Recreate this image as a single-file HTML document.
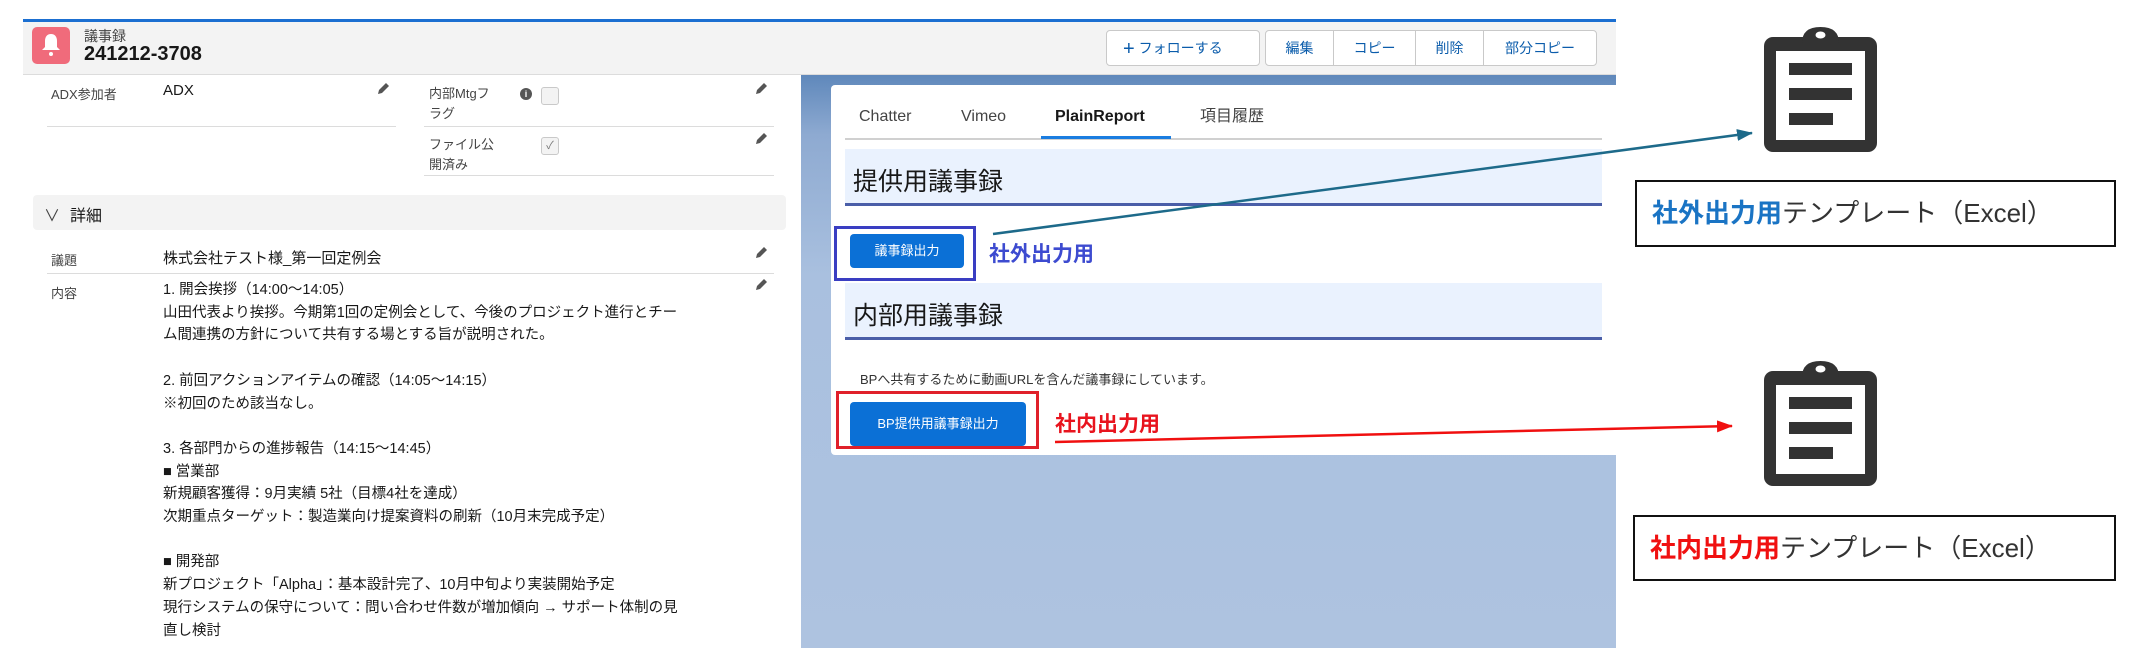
<!DOCTYPE html>
<html><head><meta charset="utf-8"><style>
*{margin:0;padding:0;box-sizing:border-box}
body{width:2130px;height:662px;background:#fff;position:relative;overflow:hidden;font-family:"Liberation Sans","Noto Sans CJK JP",sans-serif;color:#181818}
.a{position:absolute;white-space:nowrap}
.lbl{font-size:13px;color:#444}
.val{font-size:15px;color:#181818}
.pen{position:absolute;width:14px;height:14px}
.hr{position:absolute;height:1px;background:#dcdcdc}
.cl{position:absolute;left:163px;font-size:14.5px;line-height:22.7px;white-space:nowrap}
.tab{position:absolute;top:106px;font-size:16px;line-height:22px;height:22px;color:#444;white-space:nowrap}
</style></head><body>
<div class="a" style="left:23px;top:19px;width:1593px;height:3px;background:#1b6fd1"></div>
<div class="a" style="left:23px;top:22px;width:1593px;height:53px;background:#f3f3f3;border-bottom:1px solid #dcdcdc"></div>
<div class="a" style="left:32px;top:27px;width:38px;height:37px;background:#f06b7b;border-radius:5px"></div>
<svg class="a" style="left:39px;top:32px" width="24" height="26" viewBox="0 0 24 26"><path d="M12 2c-4 0-6 3-6 7v6l-3 3h18l-3-3V9c0-4-2-7-6-7z" fill="#fff"/><circle cx="12" cy="22" r="2" fill="#fff"/></svg>
<div class="a" style="left:84px;top:26px;font-size:14px;color:#444">議事録</div>
<div class="a" style="left:84px;top:43px;font-size:20px;font-weight:bold">241212-3708</div>
<div class="a" style="left:1106px;top:30px;width:154px;height:36px;border:1px solid #c9c9c9;border-radius:4px;background:#fff;color:#0b5cab;font-size:14px;line-height:34px;padding-left:16px"><span style="font-size:20px;vertical-align:-2px">+</span> フォローする</div>
<div class="a" style="left:1265px;top:30px;width:332px;height:36px;border:1px solid #c9c9c9;border-radius:4px;background:#fff;color:#0b5cab;font-size:14px;line-height:34px">
<span class="a" style="left:0;width:68px;text-align:center;border-right:1px solid #c9c9c9;height:34px">編集</span>
<span class="a" style="left:68px;width:82px;text-align:center;border-right:1px solid #c9c9c9;height:34px">コピー</span>
<span class="a" style="left:150px;width:68px;text-align:center;border-right:1px solid #c9c9c9;height:34px">削除</span>
<span class="a" style="left:218px;width:112px;text-align:center">部分コピー</span></div>

<div class="a lbl" style="left:51px;top:84px">ADX参加者</div>
<div class="a val" style="left:163px;top:82px">ADX</div>
<div class="hr" style="left:47px;top:126px;width:349px"></div>
<div class="a lbl" style="left:429px;top:84px;line-height:20px">内部Mtgフ<br>ラグ</div>
<div class="a" style="left:520px;top:88px;width:12px;height:12px;border-radius:50%;background:#555;color:#fff;font-size:9px;text-align:center;line-height:12px;font-weight:bold">i</div>
<div class="a" style="left:541px;top:87px;width:18px;height:18px;border:1px solid #c9c9c9;border-radius:3px;background:#f3f3f3"></div>
<div class="hr" style="left:424px;top:126px;width:350px"></div>
<div class="a lbl" style="left:429px;top:135px;line-height:20px">ファイル公<br>開済み</div>
<div class="a" style="left:541px;top:137px;width:18px;height:18px;border:1px solid #c9c9c9;border-radius:3px;background:#f3f3f3;font-size:11px;color:#777;text-align:center;line-height:16px">✓</div>
<div class="hr" style="left:424px;top:175px;width:350px"></div>
<div class="a" style="left:33px;top:195px;width:753px;height:35px;background:#f3f3f3;border-radius:4px"></div>
<div class="a" style="left:44px;top:202px;font-size:16px;color:#444">∨</div>
<div class="a" style="left:70px;top:202px;font-size:16px">詳細</div>
<div class="a lbl" style="left:51px;top:250px">議題</div>
<div class="a val" style="left:163px;top:247px">株式会社テスト様_第一回定例会</div>
<div class="hr" style="left:47px;top:273px;width:727px"></div>
<div class="a lbl" style="left:51px;top:283px">内容</div>
<div class="cl" style="top:279px">1. 開会挨拶（14:00〜14:05）<br>山田代表より挨拶。今期第1回の定例会として、今後のプロジェクト進行とチー<br>ム間連携の方針について共有する場とする旨が説明された。<br><br>2. 前回アクションアイテムの確認（14:05〜14:15）<br>※初回のため該当なし。<br><br>3. 各部門からの進捗報告（14:15〜14:45）<br>■ 営業部<br>新規顧客獲得：9月実績 5社（目標4社を達成）<br>次期重点ターゲット：製造業向け提案資料の刷新（10月末完成予定）<br><br>■ 開発部<br>新プロジェクト「Alpha」：基本設計完了、10月中旬より実装開始予定<br>現行システムの保守について：問い合わせ件数が増加傾向 → サポート体制の見<br>直し検討</div>
<svg class="pen" style="left:376px;top:82px" viewBox="0 0 14 14"><path d="M2 12l1-4 7-7 3 3-7 7z" fill="#555"/></svg>
<svg class="pen" style="left:754px;top:82px" viewBox="0 0 14 14"><path d="M2 12l1-4 7-7 3 3-7 7z" fill="#555"/></svg>
<svg class="pen" style="left:754px;top:132px" viewBox="0 0 14 14"><path d="M2 12l1-4 7-7 3 3-7 7z" fill="#555"/></svg>
<svg class="pen" style="left:754px;top:246px" viewBox="0 0 14 14"><path d="M2 12l1-4 7-7 3 3-7 7z" fill="#555"/></svg>
<svg class="pen" style="left:754px;top:278px" viewBox="0 0 14 14"><path d="M2 12l1-4 7-7 3 3-7 7z" fill="#555"/></svg>

<div class="a" style="left:801px;top:75px;width:815px;height:573px;background:linear-gradient(180deg,#5f88bb 0,#8eaad1 60px,#a9c0df 200px,#aec3e0 100%)"></div>
<div class="a" style="left:831px;top:85px;width:785px;height:370px;background:#fff;border-radius:4px 0 0 4px"></div>
<div class="tab" style="left:859px">Chatter</div>
<div class="tab" style="left:961px">Vimeo</div>
<div class="tab" style="left:1055px;font-weight:bold;color:#181818">PlainReport</div>
<div class="tab" style="left:1200px">項目履歴</div>
<div class="a" style="left:845px;top:138px;width:757px;height:2px;background:#d0d0d0"></div>
<div class="a" style="left:1041px;top:136px;width:130px;height:3px;background:#1b7de0"></div>
<div class="a" style="left:845px;top:149px;width:757px;height:57px;background:#eaf2fe;border-bottom:3px solid #4a5ea8"></div>
<div class="a" style="left:853px;top:162px;font-size:25px">提供用議事録</div>
<div class="a" style="left:834px;top:226px;width:142px;height:55px;border:3px solid #3a3ec2"></div>
<div class="a" style="left:850px;top:234px;width:114px;height:34px;background:#0b70d6;border-radius:4px;color:#fff;font-size:13px;text-align:center;line-height:34px">議事録出力</div>
<div class="a" style="left:989px;top:238px;font-size:21px;font-weight:bold;color:#3d4bd0">社外出力用</div>
<div class="a" style="left:845px;top:283px;width:757px;height:57px;background:#eaf2fe;border-bottom:3px solid #4a5ea8"></div>
<div class="a" style="left:853px;top:296px;font-size:25px">内部用議事録</div>
<div class="a" style="left:860px;top:369px;font-size:13px;color:#333">BPへ共有するために動画URLを含んだ議事録にしています。</div>
<div class="a" style="left:836px;top:391px;width:203px;height:58px;border:3px solid #e0202a"></div>
<div class="a" style="left:850px;top:402px;width:176px;height:44px;background:#0b70d6;border-radius:4px;color:#fff;font-size:13px;text-align:center;line-height:44px">BP提供用議事録出力</div>
<div class="a" style="left:1055px;top:408px;font-size:21px;font-weight:bold;color:#e8141e">社内出力用</div>

<svg class="a" style="left:0;top:0" width="2130" height="662">
<defs><marker id="mt" markerWidth="16" markerHeight="12" refX="15" refY="6" orient="auto" markerUnits="userSpaceOnUse"><path d="M0 0L16 6 0 12z" fill="#1d6a8a"/></marker>
<marker id="mr" markerWidth="16" markerHeight="12" refX="15" refY="6" orient="auto" markerUnits="userSpaceOnUse"><path d="M0 0L16 6 0 12z" fill="#f01010"/></marker></defs>
<line x1="993" y1="234" x2="1752" y2="133" stroke="#1d6a8a" stroke-width="2.5" marker-end="url(#mt)"/>
<line x1="1055" y1="442" x2="1732" y2="426" stroke="#f01010" stroke-width="2.5" marker-end="url(#mr)"/>
</svg>
<svg class="a" style="left:1764px;top:27px" width="113" height="125" viewBox="0 0 113 125"><rect x="0" y="10" width="113" height="115" rx="9" fill="#333"/><path d="M38 16Q38 0 56.5 0Q75 0 75 16z" fill="#333"/><ellipse cx="56.5" cy="8" rx="5" ry="3.5" fill="#fff"/><rect x="12" y="24" width="89" height="89" fill="#fff"/><rect x="25" y="36" width="63" height="12" fill="#333"/><rect x="25" y="61" width="63" height="12" fill="#333"/><rect x="25" y="86" width="44" height="12" fill="#333"/></svg>
<svg class="a" style="left:1764px;top:361px" width="113" height="125" viewBox="0 0 113 125"><rect x="0" y="10" width="113" height="115" rx="9" fill="#333"/><path d="M38 16Q38 0 56.5 0Q75 0 75 16z" fill="#333"/><ellipse cx="56.5" cy="8" rx="5" ry="3.5" fill="#fff"/><rect x="12" y="24" width="89" height="89" fill="#fff"/><rect x="25" y="36" width="63" height="12" fill="#333"/><rect x="25" y="61" width="63" height="12" fill="#333"/><rect x="25" y="86" width="44" height="12" fill="#333"/></svg>
<div class="a" style="left:1635px;top:180px;width:481px;height:67px;border:2px solid #111;font-size:26px;line-height:63px;padding-left:15px;color:#333"><b style="color:#1a74c4">社外出力用</b>テンプレート（Excel）</div>
<div class="a" style="left:1633px;top:515px;width:483px;height:66px;border:2px solid #111;font-size:26px;line-height:62px;padding-left:15px;color:#333"><b style="color:#f01010">社内出力用</b>テンプレート（Excel）</div>
</body></html>
